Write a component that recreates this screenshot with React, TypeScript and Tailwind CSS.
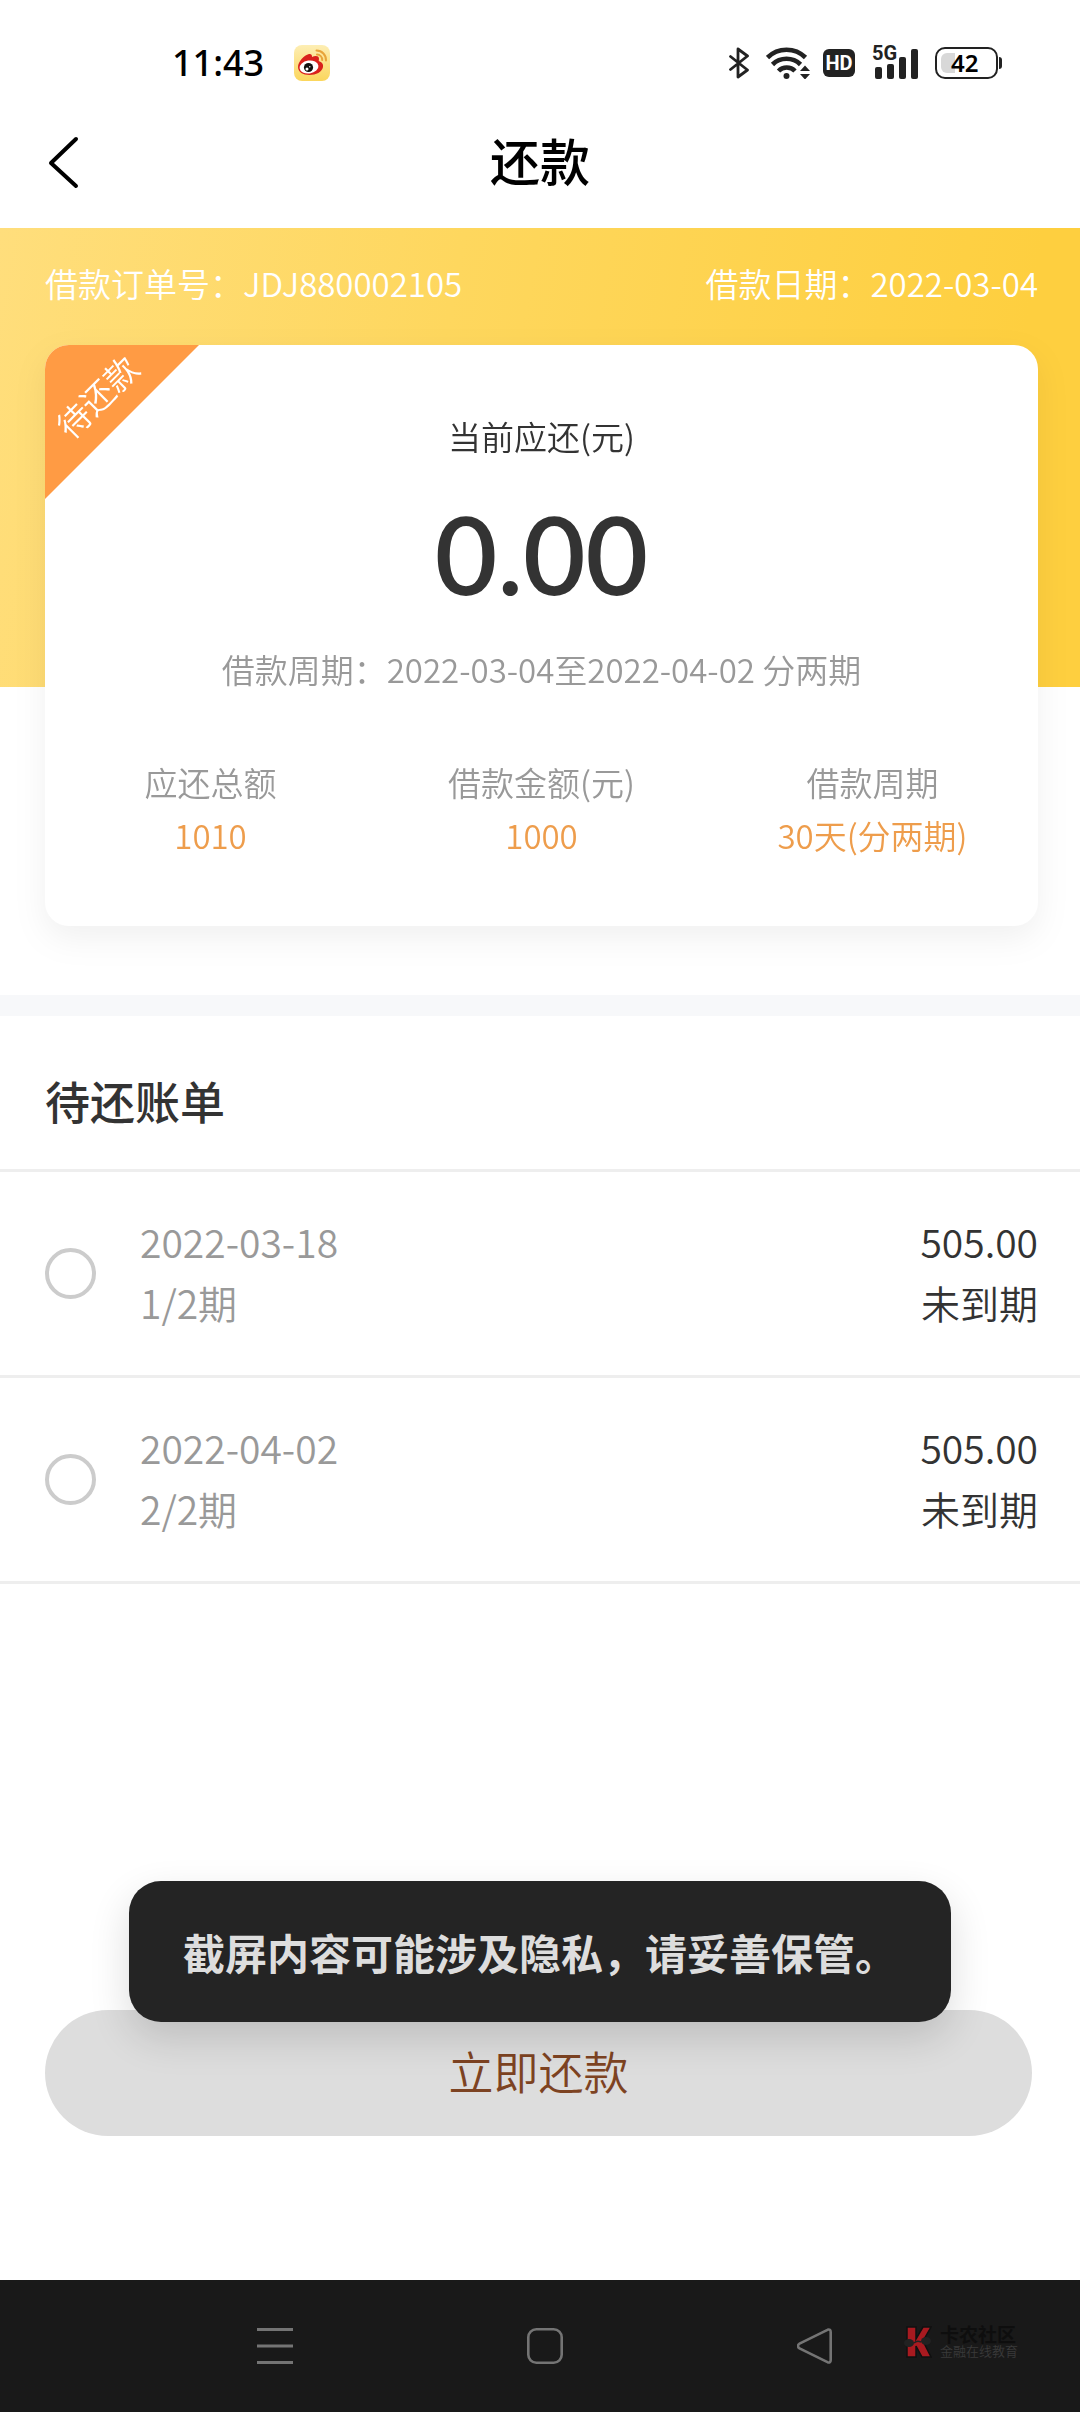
import { useState } from 'react';

interface Bill {
  id: string;
  date: string;
  term: string;
  amount: string;
  status: string;
}

const bills: Bill[] = [
  { id: 'bill-1', date: '2022-03-18', term: '1/2期', amount: '505.00', status: '未到期' },
  { id: 'bill-2', date: '2022-04-02', term: '2/2期', amount: '505.00', status: '未到期' },
];

const summary = [
  { label: '应还总额', value: '1010' },
  { label: '借款金额(元)', value: '1000' },
  { label: '借款周期', value: '30天(分两期)' },
];

const WeiboIcon = () => (
  <svg className="size-9" viewBox="0 0 36 36" fill="none">
    <defs>
      <linearGradient id="weibo-bg" x1="0" y1="0" x2="0" y2="1">
        <stop offset="0" stopColor="#fdeeb4" />
        <stop offset="1" stopColor="#fbd65c" />
      </linearGradient>
    </defs>
    <rect width="36" height="36" rx="8" fill="url(#weibo-bg)" />
    <path
      d="M4 22c0-5 6-12 11-13 2-.4 3.200.8 3 3 3-1.300 7-1.500 7 1.800 0 1-.3 1.700-.3 2.200 3 1 4.800 2.800 4.300 6-.8 5-7 8-13.500 8S4 27 4 22z"
      fill="#d9211c"
    />
    <ellipse cx="15" cy="22" rx="9.500" ry="6.500" fill="#fff" transform="rotate(-8 15 22)" />
    <circle cx="14.500" cy="22.500" r="4.600" fill="#111" />
    <circle cx="13" cy="24" r="1.500" fill="#fff" />
    <circle cx="15.800" cy="21.800" r="0.700" fill="#fff" />
    <path d="M22.500 5.500a9.500 9.500 0 0 1 9.500 10" stroke="#e8a43a" strokeWidth="2" strokeLinecap="round" />
    <path d="M23 9.500a5.500 5.500 0 0 1 5.200 5.500" stroke="#e8a43a" strokeWidth="2" strokeLinecap="round" />
  </svg>
);

const BluetoothIcon = () => (
  <svg className="h-8 w-5" viewBox="0 0 20 32" fill="none" stroke="#222" strokeWidth="2.800" strokeLinejoin="round" strokeLinecap="round">
    <path d="M1.500 9.500 18.500 23 9 30V2l9.500 7L1.500 22.500" />
  </svg>
);

const WifiIcon = () => (
  <svg className="h-8 w-11" viewBox="0 0 44 32" fill="none" stroke="#222" strokeWidth="4.600">
    <path d="M1.500 10.500a27 27 0 0 1 38 0" />
    <path d="M6.500 17.500a20 20 0 0 1 28 0" />
    <path d="M12.500 24a11.500 11.500 0 0 1 16.500 0" />
    <circle cx="20.500" cy="29" r="3" fill="#222" stroke="none" />
    <path d="M34 24h10l-5-5.500zM34 27h10l-5 5.500z" fill="#222" stroke="none" />
  </svg>
);

const SignalIcon = () => (
  <svg className="h-8 w-[46px]" viewBox="0 0 46 32" fill="#222">
    <rect x="3" y="20" width="7" height="12" rx="2" />
    <rect x="15" y="17" width="7" height="15" rx="2" />
    <rect x="27" y="10" width="7" height="22" rx="2" />
    <rect x="39" y="2" width="7" height="30" rx="2" />
  </svg>
);

const StatusBar = () => (
  <div className="flex h-[126px] items-center justify-between pr-[78px] pl-[172px] text-[#222]">
    <div className="flex items-center gap-[30px]">
      <time className="font-['Noto_Sans'] text-4xl font-medium text-black">11:43</time>
      <WeiboIcon />
    </div>
    <div className="flex items-center gap-[17px]">
      <BluetoothIcon />
      <WifiIcon />
      <span className="-ml-1 flex h-7 w-8 items-center justify-center rounded-md bg-[#222] font-[Roboto] text-xl font-bold text-white">
        HD
      </span>
      <div className="relative">
        <SignalIcon />
        <span className="absolute -top-1 left-0 bg-white font-[Roboto] text-xl leading-5 font-bold">5G</span>
      </div>
      <div className="flex items-center gap-px">
        <div className="flex h-8 w-[63px] items-center rounded-[10px] border-2 border-[#222] p-1">
          <div className="flex h-full w-3.5 items-center rounded-l-md bg-[#d8d8d8] pl-2.5 font-['Noto_Sans'] text-2xl font-semibold text-black">
            42
          </div>
        </div>
        <div className="h-3 w-[3px] rounded-r bg-[#222]" />
      </div>
    </div>
  </div>
);

const Header = () => (
  <header className="grid h-[102px] grid-cols-[1fr_auto_1fr] items-start px-[45px]">
    <button type="button" aria-label="返回" className="mt-[9px] w-9">
      <svg className="h-[54px] w-9" viewBox="0 0 36 54" fill="none" stroke="#000" strokeWidth="4" strokeLinecap="round" strokeLinejoin="round">
        <path d="M31 4 6 28l25 23" />
      </svg>
    </button>
    <h1 className="text-[50px] leading-[66px] font-medium text-black">还款</h1>
  </header>
);

const LoanCard = () => (
  <section className="relative mr-[42px] ml-[45px] overflow-hidden rounded-3xl bg-white pt-[66px] pb-[66px] text-center text-[33px] leading-[50px]">
    <div className="absolute top-0 left-0 size-[154px] bg-[#ff9b44] [clip-path:polygon(0_0,100%_0,0_100%)]" />
    <div className="absolute top-0 left-0 flex size-[102px] items-center justify-center text-white">
      <span className="-rotate-45 whitespace-nowrap">待还款</span>
    </div>
    <p className="text-[#333]">当前应还(元)</p>
    <p className="mt-8 font-[Lato] text-[108px] leading-[120px] font-semibold text-[#333]">0.00</p>
    <p className="mt-[31px] text-[#999]">借款周期：2022-03-04至2022-04-02 分两期</p>
    <dl className="mt-[63px] grid grid-cols-3">
      {summary.map((item) => (
        <div key={item.label}>
          <dt className="text-[#999]">{item.label}</dt>
          <dd className="mt-[3px] text-[#ee9d4c]">{item.value}</dd>
        </div>
      ))}
    </dl>
  </section>
);

const BillRow = ({ bill, checked, onSelect }: { bill: Bill; checked: boolean; onSelect: (id: string) => void }) => (
  <label className="flex h-[206px] cursor-pointer items-center border-b-[3px] border-[#eee] pr-[42px] pl-[45px] text-[39px] leading-[61px]">
    <input
      type="radio"
      name="bill"
      checked={checked}
      onChange={() => onSelect(bill.id)}
      className="size-[51px] shrink-0 appearance-none rounded-full border-4 border-[#ccc] checked:border-[#ff9b44]"
    />
    <span className="ml-11 flex flex-1 flex-col pb-1 text-[#999]">
      <span>{bill.date}</span>
      <span>{bill.term}</span>
    </span>
    <span className="flex flex-col pb-1 text-right text-[#333]">
      <span>{bill.amount}</span>
      <span>{bill.status}</span>
    </span>
  </label>
);

const Watermark = () => (
  <div className="absolute top-[45px] right-[62px] flex items-center gap-2">
    <svg className="h-8 w-7" viewBox="0 0 28 32">
      <path d="M3 1h9v12L19 1h8l-8 14 8 16h-9l-6-11v11H3z" fill="#a81a20" stroke="#101010" strokeWidth="1.500" />
      <ellipse cx="5" cy="17" rx="5" ry="4" fill="#222" />
      <ellipse cx="22" cy="15" rx="5" ry="4" fill="#222" />
      <path d="M10 17q3-3 7-1" stroke="#222" strokeWidth="1.500" fill="none" />
    </svg>
    <div>
      <p className="text-[19px] leading-[18px] font-bold text-[#0e0e0e]">卡农社区</p>
      <p className="text-[13px] leading-4 text-[#3a3a3a]">金融在线教育</p>
    </div>
  </div>
);

const NavBar = () => (
  <nav className="relative grid h-[132px] grid-cols-3 items-center justify-items-center bg-[#191919] pr-[130px] pl-[140px]">
    <button type="button" aria-label="菜单">
      <svg className="size-9" viewBox="0 0 36 36" stroke="#747474" strokeWidth="3">
        <path d="M0 1.500h36M0 18h36M0 34.500h36" />
      </svg>
    </button>
    <button type="button" aria-label="主页">
      <svg className="size-9" viewBox="0 0 36 36" fill="none" stroke="#747474" strokeWidth="2.600">
        <rect x="1.300" y="1.300" width="33.400" height="33.400" rx="8" />
      </svg>
    </button>
    <button type="button" aria-label="后退">
      <svg className="size-9" viewBox="0 0 36 36" fill="none" stroke="#747474" strokeWidth="2.600" strokeLinejoin="round">
        <path d="M30.500 1.800 2.500 15.600a2.700 2.700 0 0 0 0 4.800l28 13.800q3.200 1 3.200-2.200V4q0-3.200-3.200-2.200z" />
      </svg>
    </button>
    <Watermark />
  </nav>
);

export default function App() {
  const [selected, setSelected] = useState('');

  return (
    <div className="flex min-h-screen flex-col bg-white font-['Noto_Sans_CJK_SC',sans-serif] font-[350]">
      <StatusBar />
      <Header />

      <div className="bg-[linear-gradient(100deg,#ffde7c_0%,#fed75e_40%,#fecf3f_90%)] bg-[length:100%_459px] bg-no-repeat pb-[69px]">
        <div className="flex h-[117px] items-center justify-between pr-[42px] pb-1.5 pl-[45px] text-[33px] text-white">
          <span>借款订单号：JDJ880002105</span>
          <span>借款日期：2022-03-04</span>
        </div>
        <div className="[filter:drop-shadow(0_12px_16px_rgba(0,0,0,0.06))]">
          <LoanCard />
        </div>
      </div>

      <div className="h-[21px] bg-[#f7f8fa]" />

      <main className="flex flex-1 flex-col">
        <h2 className="border-b-[3px] border-[#eee] px-[45px] pt-[52px] pb-[35px] text-[45px] leading-[66px] font-medium text-[#333]">
          待还账单
        </h2>
        {bills.map((bill) => (
          <BillRow key={bill.id} bill={bill} checked={selected === bill.id} onSelect={setSelected} />
        ))}

        <div className="relative mt-auto mb-36 pr-12 pl-[45px]">
          <button type="button" className="h-[126px] w-full rounded-full bg-[#ddd] pb-1 text-[45px] text-[#7d4322]">
            立即还款
          </button>
          <div
            role="status"
            className="absolute bottom-[114px] left-1/2 flex h-[141px] -translate-x-1/2 items-center rounded-[32px] bg-[#242424] px-[54px] text-[42px] font-bold whitespace-nowrap text-[#ddd] shadow-[0_16px_40px_rgba(0,0,0,0.14)]"
          >
            截屏内容可能涉及隐私，请妥善保管。
          </div>
        </div>
      </main>

      <NavBar />
    </div>
  );
}
